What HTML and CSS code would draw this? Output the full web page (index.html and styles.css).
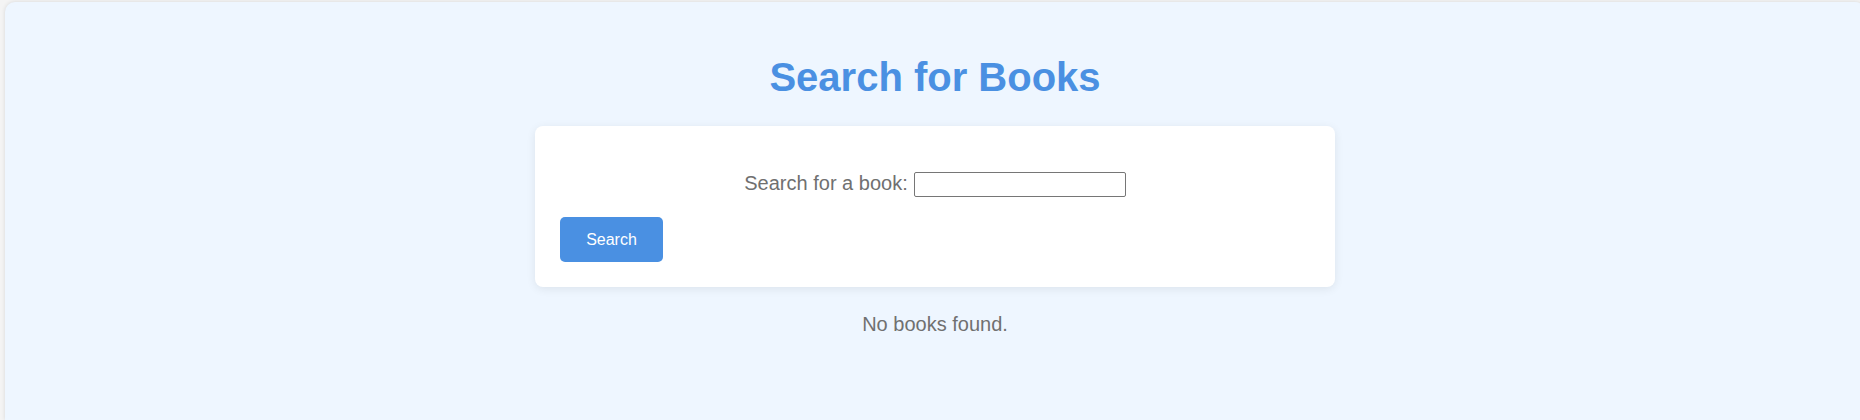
FILE: index.html
```html
<!DOCTYPE html>
<html lang="en">
<head>
<meta charset="utf-8">
<title>Search for Books</title>
<link rel="stylesheet" href="styles.css">
</head>
<body>
  <div class="page">
    <h1 class="title">Search for Books</h1>
    <div class="card">
      <form class="search-form">
        <div class="row">
          <label class="label" for="q">Search for a book:</label>
          <input class="input" id="q" type="text">
        </div>
        <button class="btn" type="button">Search</button>
      </form>
    </div>
    <p class="empty">No books found.</p>
  </div>
</body>
</html>
```

FILE: styles.css
```css
html, body {
  margin: 0;
  overflow: hidden;
}
body {
  background: #f4f4f4;
  padding: 2px 0 0 5px;
  font-family: "Liberation Sans", Arial, sans-serif;
  font-size: 20px;
  color: #707070;
}
.page {
  box-sizing: border-box;
  width: 1860px;
  height: 418px;
  background: #eef6ff;
  border-radius: 10px 10px 0 0;
  box-shadow: 0 0 4px rgba(0, 0, 0, 0.12);
  padding: 25px;
  display: flex;
  flex-direction: column;
  align-items: center;
}
.title {
  margin: 27px 0 26px;
  font-size: 40px;
  font-weight: bold;
  color: #4a90e2;
  line-height: 46px;
}
.card {
  box-sizing: border-box;
  width: 800px;
  background: #fff;
  border-radius: 8px;
  box-shadow: 0 2px 10px rgba(0, 0, 0, 0.08);
  padding: 25px;
}
.search-form {
  margin: 0;
}
.row {
  margin-top: 20px;
  display: flex;
  justify-content: center;
  align-items: center;
  gap: 6px;
  height: 25px;
}
.label {
  line-height: 23px;
}
.input {
  box-sizing: border-box;
  width: 212px;
  height: 25px;
  border: 1px solid #767676;
  border-radius: 2px;
  padding: 1px 2px;
  font-size: 16px;
  margin-top: 2px;
}
.btn {
  display: block;
  margin-top: 21px;
  height: 45px;
  width: 103px;
  padding: 0;
  border: none;
  border-radius: 5px;
  background: #4a90e2;
  color: #fff;
  font-family: "Liberation Sans", Arial, sans-serif;
  font-size: 16px;
}
.empty {
  margin: 26px 0 0;
  line-height: 23px;
}
```
